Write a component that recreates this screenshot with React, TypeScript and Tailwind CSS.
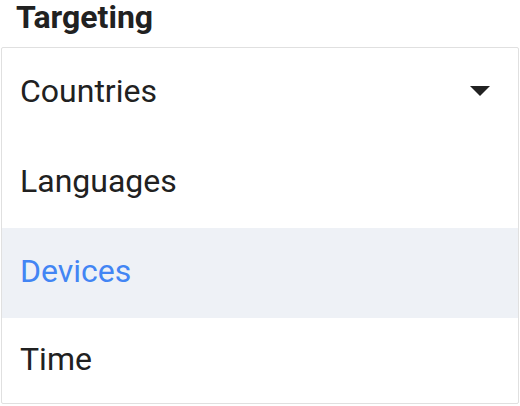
const items = ["Countries", "Languages", "Devices", "Time"];

export default function App() {
  return (
    <div className="w-[520px] h-[406px] bg-white font-['Roboto',sans-serif] text-[#212121] overflow-hidden">
      <h2 className="pl-[16px] pt-[1px] h-[47px] text-[32px] leading-[32px] font-bold">Targeting</h2>
      <div className="ml-[1px] w-[518px] border border-[#e0e0e0] rounded-[2px]">
        {items.map((item, i) => (
          <div
            key={item}
            className={
              "flex items-center justify-between pl-[18px] pr-[28px] pb-[4px] text-[32px] " +
              (i === 3 ? "h-[85px] " : "h-[90px] ") +
              (item === "Devices" ? "bg-[#eef1f6] text-[#4285f4]" : "")
            }
          >
            <span>{item}</span>
            {i === 0 && (
              <svg width="20" height="10" viewBox="0 0 20 10">
                <path d="M0 0h20L10 10z" fill="#212121" />
              </svg>
            )}
          </div>
        ))}
      </div>
    </div>
  );
}
